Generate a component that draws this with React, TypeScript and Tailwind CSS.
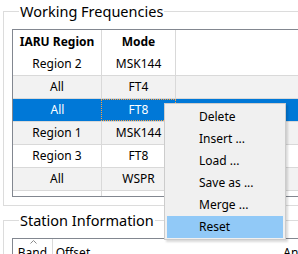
import React from "react";

const rows = [
  { region: "Region 2", mode: "MSK144" },
  { region: "All", mode: "FT4" },
  { region: "All", mode: "FT8", selected: true },
  { region: "Region 1", mode: "MSK144" },
  { region: "Region 3", mode: "FT8" },
  { region: "All", mode: "WSPR" },
];

const menu = ["Delete", "Insert ...", "Load ...", "Save as ...", "Merge ...", "Reset"];

export default function App() {
  return (
    <div
      className="relative w-[298px] h-[254px] overflow-hidden bg-white text-[12px] leading-[16px] text-black"
      style={{ fontFamily: '"Noto Sans", "Segoe UI", sans-serif' }}
    >
      <fieldset className="ml-[3px] mt-[3px] w-[330px] border border-[#dcdcdc] pl-[8px] pt-[10px] pb-[8px]">
        <legend className="ml-[7px] px-[1px] text-[14.5px] leading-[16px]">Working Frequencies</legend>
        <div className="w-[320px] h-[168px] border border-[#828790] flex flex-col">
          <div className="flex h-[23px] items-center font-bold">
            <div className="w-[89px] h-full border-r border-[#d9d9d9] flex items-center justify-center">IARU Region</div>
            <div className="w-[74px] h-full border-r border-[#d9d9d9] flex items-center justify-center">Mode</div>
            <div className="flex-1" />
          </div>
          {rows.map((r, i) => {
            const bg = r.selected ? "bg-[#0078d7] text-white" : i % 2 === 1 ? "bg-[#f2f2f2]" : "bg-white";
            return (
              <div key={i} className={`flex h-[23px] border-b border-[#d9d9d9] ${bg}`}>
                <div className={`w-[89px] h-full flex items-center justify-center ${r.selected ? "" : "border-r border-[#d9d9d9]"}`}>
                  {r.region}
                </div>
                {r.selected ? (
                  <div className="w-[75px] h-full border border-dotted border-[#ffa040] flex items-center justify-center -ml-[1px]">
                    {r.mode}
                  </div>
                ) : (
                  <div className="w-[74px] h-full border-r border-[#d9d9d9] flex items-center justify-center">{r.mode}</div>
                )}
                <div className="flex-1" />
              </div>
            );
          })}
          <div className="flex flex-1">
            <div className="w-[89px] border-r border-[#d9d9d9]" />
            <div className="w-[74px] border-r border-[#d9d9d9]" />
          </div>
        </div>
      </fieldset>

      <fieldset className="ml-[3px] mt-[6px] w-[330px] h-[80px] border border-[#dcdcdc] pl-[8px] pt-[10px]">
        <legend className="ml-[7px] px-[1px] text-[14.5px] leading-[16px]">Station Information</legend>
        <div className="w-[320px] h-[40px] border border-[#828790]">
          <div className="flex h-[24px]">
            <div className="w-[41px] h-full border-r border-[#d9d9d9] relative flex items-center justify-center pt-[4px]">
              <svg className="absolute top-[1px] left-[17px]" width="7" height="4" viewBox="0 0 7 4">
                <polyline points="0.5,3.5 3.5,0.5 6.5,3.5" fill="none" stroke="#8a8a8a" strokeWidth="1" />
              </svg>
              <span>Band</span>
            </div>
            <div className="w-[50px] h-full flex items-center pl-[3px] pt-[4px]">
              <span>Offset</span>
            </div>
            <div className="flex-1 h-full flex items-center pl-[182px] pt-[4px]">
              <span>Antenna</span>
            </div>
          </div>
        </div>
      </fieldset>

      <div className="absolute left-[164px] top-[103px] w-[122px] h-[137px] bg-[#f0f0f0] border border-[#cccccc] shadow-[2px_2px_2px_rgba(0,0,0,0.15)] pt-[2px] px-[2px]">
        {menu.map((m) => (
          <div
            key={m}
            className={`h-[22px] flex items-center pl-[32px] ${m === "Reset" ? "bg-[#91c9f7]" : ""}`}
          >
            {m}
          </div>
        ))}
      </div>
    </div>
  );
}
